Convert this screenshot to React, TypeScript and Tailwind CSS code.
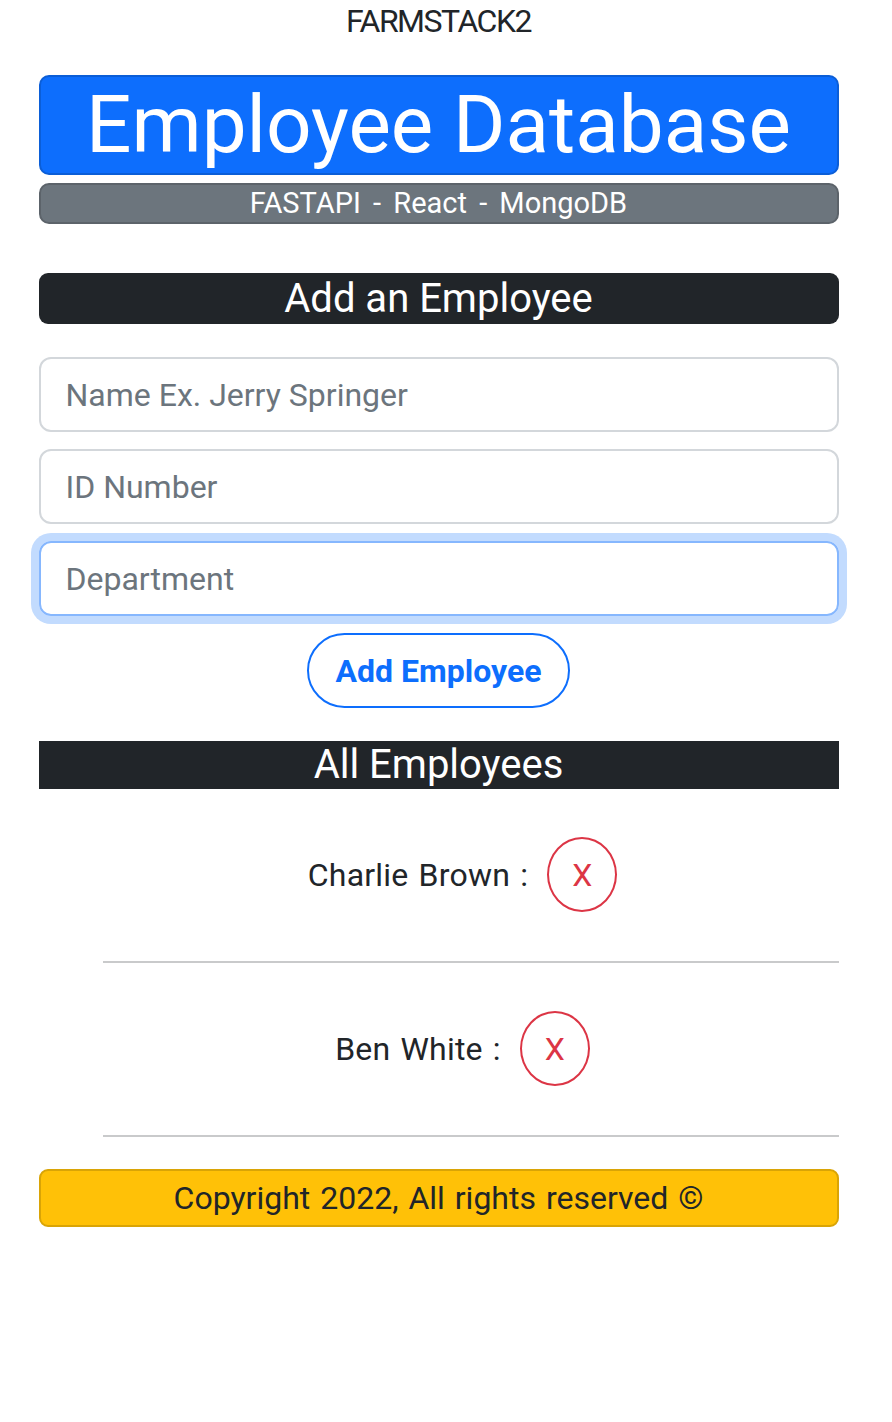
import React from 'react';

const employees = ['Charlie Brown', 'Ben White'];

function EmployeeRow({ name }: { name: string }) {
  return (
    <div className="pt-[48px]">
      <div className="flex items-center justify-center pr-[16px]">
        <span className="text-[32px] leading-[48px] tracking-[0.2px] text-[#212529] [word-spacing:2px]">{name} :</span>
        <button
          type="button"
          className="ml-[19px] h-[75px] w-[70px] rounded-[50%] border-2 border-[#dc3545] text-[32px] leading-none text-[#dc3545]"
        >
          X
        </button>
      </div>
      <hr className="mt-[49px] border-0 border-t-2 border-[#c9cacb]" />
    </div>
  );
}

export default function App() {
  return (
    <div className="min-h-[1422px] w-[877px] bg-white font-['Roboto','Liberation_Sans',Arial,sans-serif] text-[#212529]">
      <div className="mx-auto w-[800px]">
        <h1 className="text-center text-[32px] leading-[42px] tracking-[-1.5px]">FARMSTACK2</h1>

        <div className="mt-[33px] h-[100px] rounded-[10px] border-2 border-[#0b5ed7] bg-[#0d6efd] pt-[1px] text-center text-[80px] leading-[94px] text-white">
          Employee Database
        </div>
        <div className="mt-[8px] flex h-[41px] items-center justify-center rounded-[10px] border-2 border-[#5c636a] bg-[#6c757d] text-[29px] text-white [word-spacing:5px]">
          FASTAPI - React - MongoDB
        </div>

        <div className="mt-[49px] flex h-[51px] items-center justify-center rounded-[9px] bg-[#212529] text-[40px] text-white">
          Add an Employee
        </div>

        <form className="mt-[33px] flex flex-col gap-[17px]" onSubmit={(e) => e.preventDefault()}>
          <input
            className="h-[75px] w-full rounded-[12px] border-2 border-[#d3d7db] px-[25px] text-[32px] outline-none placeholder:text-[#6c757d]"
            placeholder="Name Ex. Jerry Springer"
          />
          <input
            className="h-[75px] w-full rounded-[12px] border-2 border-[#d3d7db] px-[25px] text-[32px] outline-none placeholder:text-[#6c757d]"
            placeholder="ID Number"
          />
          <input
            autoFocus
            className="h-[75px] w-full rounded-[12px] border-2 border-[#86b7fe] px-[25px] text-[32px] caret-[#212529] shadow-[0_0_0_8px_#c2dbfe] outline-none placeholder:text-[#6c757d]"
            placeholder="Department"
          />
          <div className="flex justify-center">
            <button
              type="submit"
              className="h-[75px] w-[263px] rounded-full border-2 border-[#0d6efd] text-[32px] font-bold text-[#0d6efd]"
            >
              Add Employee
            </button>
          </div>
        </form>

        <div className="mt-[33px] flex h-[48px] items-center justify-center bg-[#212529] text-[40px] text-white">
          All Employees
        </div>

        <div className="pl-[64px]">
          {employees.map((name) => (
            <EmployeeRow key={name} name={name} />
          ))}
        </div>

        <div className="mt-[32px] flex h-[58px] items-center justify-center rounded-[9px] border-2 border-[#d9a406] bg-[#ffc107] text-[32px] text-[#212529] [word-spacing:2px]">
          Copyright 2022, All rights reserved ©
        </div>
      </div>
    </div>
  );
}
